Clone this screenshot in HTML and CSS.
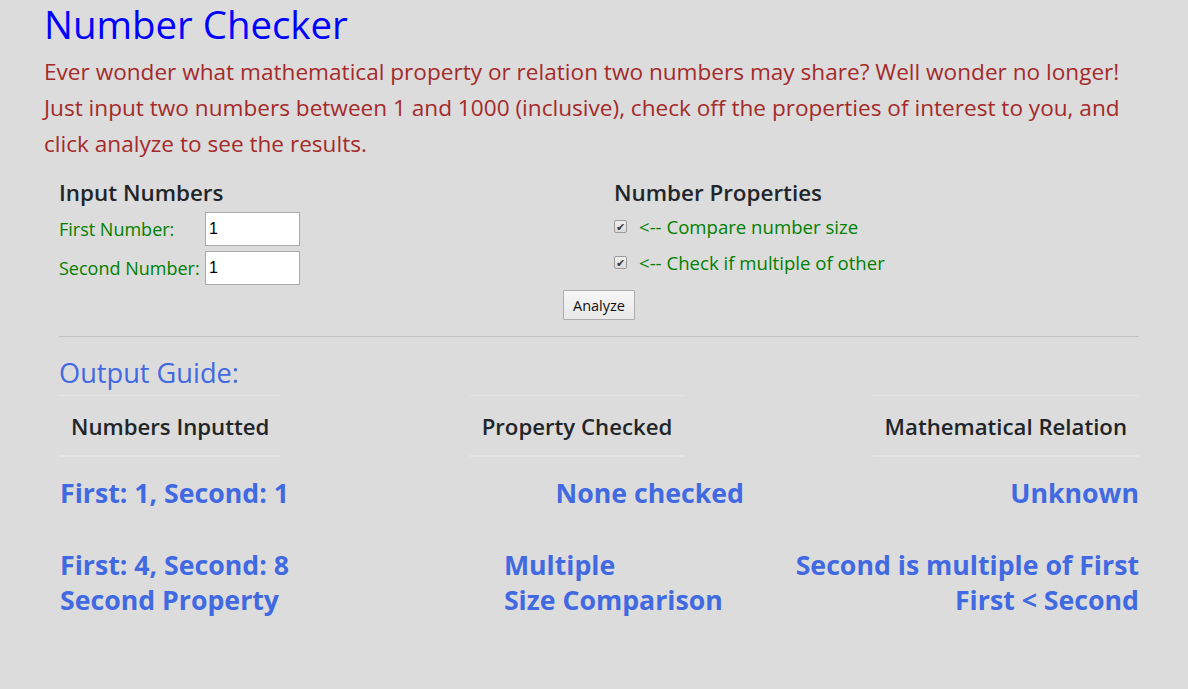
FILE: index.html
```html
<!DOCTYPE html>
<html lang="en">
<head>
<meta charset="utf-8">
<title>Number Checker</title>
<link rel="stylesheet" href="styles.css">
</head>
<body>
<main class="page">
  <h1 class="title">Number Checker</h1>
  <p class="intro">Ever wonder what mathematical property or relation two numbers may share? Well wonder no longer! Just input two numbers between 1 and 1000 (inclusive), check off the properties of interest to you, and click analyze to see the results.</p>

  <section class="form-area">
    <div class="cols">
      <div class="col">
        <h4 class="sub">Input Numbers</h4>
        <div class="fields">
          <label class="lbl" for="n1">First Number:</label>
          <input class="num" id="n1" type="text" value="1">
          <label class="lbl" for="n2">Second Number:</label>
          <input class="num" id="n2" type="text" value="1">
        </div>
      </div>
      <div class="col">
        <h4 class="sub">Number Properties</h4>
        <div class="checks">
          <label class="chk"><span class="box" aria-hidden="true">✔</span><span class="chk-text">&lt;-- Compare number size</span></label>
          <label class="chk"><span class="box" aria-hidden="true">✔</span><span class="chk-text">&lt;-- Check if multiple of other</span></label>
        </div>
      </div>
    </div>
    <div class="actions"><button class="btn" type="button">Analyze</button></div>
  </section>

  <section class="guide">
    <hr class="rule">
    <h3 class="guide-title">Output Guide:</h3>
    <div class="row head">
      <div class="th">Numbers Inputted</div>
      <div class="th">Property Checked</div>
      <div class="th">Mathematical Relation</div>
    </div>
    <div class="row res">
      <div class="cell">First: 1, Second: 1</div>
      <div class="cell">None checked</div>
      <div class="cell right">Unknown</div>
    </div>
    <div class="row res">
      <div class="cell">First: 4, Second: 8<br>Second Property</div>
      <div class="cell mid">Multiple<br>Size Comparison</div>
      <div class="cell right">Second is multiple of First<br>First &lt; Second</div>
    </div>
  </section>
</main>
</body>
</html>
```

FILE: styles.css
```css
* { box-sizing: border-box; }
html, body { margin: 0; padding: 0; }
body {
  background: #dcdcdc;
  font-family: "Open Sans", "Noto Sans", sans-serif;
  color: #212529;
}
.page {
  padding: 0 34px 0 44px;
}
.title {
  margin: 0 0 6px;
  font-size: 38.4px;
  font-weight: 400;
  line-height: 48px;
  color: #0000ff;
}
.intro {
  margin: 0 0 16px;
  font-size: 22.6px;
  line-height: 36px;
  color: #a52a2a;
}
.form-area { padding: 0 15px; }
.cols {
  display: grid;
  grid-template-columns: 1fr 1fr;
  column-gap: 30px;
}
.sub {
  margin: 0 0 5px;
  font-size: 22.4px;
  font-weight: 600;
  line-height: 29px;
  color: #212529;
}
.fields {
  display: grid;
  grid-template-columns: 146px 95px;
  row-gap: 5px;
  align-items: center;
}
.lbl {
  font-size: 18px;
  color: #008000;
  white-space: nowrap;
}
.num {
  width: 95px;
  height: 34px;
  border: 1px solid #aaaaaa;
  background: #fff;
  padding: 0 3px;
  font-family: "Liberation Sans", Arial, sans-serif;
  font-size: 16px;
  color: #000;
}
.checks {
  display: flex;
  flex-direction: column;
  gap: 13px;
  padding-top: 3px;
}
.chk {
  display: flex;
  align-items: center;
  gap: 12px;
  height: 23px;
  font-size: 18.6px;
  color: #008000;
}
.box {
  display: inline-flex;
  align-items: center;
  justify-content: center;
  width: 13px;
  height: 13px;
  border: 1px solid #9a9a9a;
  border-radius: 2px;
  background: linear-gradient(#f0f0f0, #dadada);
  color: #3a3a3a;
  font-size: 11px;
  line-height: 1;
}
.actions {
  display: flex;
  justify-content: center;
  padding-top: 5px;
}
.btn {
  height: 30px;
  padding: 0 9px;
  border: 1px solid #adadad;
  background: linear-gradient(#f6f6f6, #e8e8e8);
  font-family: "Open Sans", sans-serif;
  font-size: 14.5px;
  color: #111;
  border-radius: 1px;
}
.guide { padding: 0 15px; }
.rule {
  margin: 16px 0 0;
  border: 0;
  border-top: 1px solid #c4c4c4;
}
.guide-title {
  margin: 20px 0 7px;
  font-size: 27.2px;
  font-weight: 400;
  line-height: 31px;
  color: #4169e1;
}
.row {
  display: flex;
  justify-content: space-between;
}
.th {
  padding: 16px 12px 14px;
  border-top: 1px solid #e2e5e8;
  border-bottom: 2px solid #e2e5e8;
  font-size: 22.2px;
  font-weight: 600;
  line-height: 29px;
  color: #212529;
}
.res {
  font-size: 26.7px;
  font-weight: 700;
  line-height: 35px;
  color: #4169e1;
}
.res + .res { margin-top: 37px; }
.head + .res { margin-top: 18px; }
.cell:first-child { padding-left: 1px; }
.right { text-align: right; }
.mid { margin-left: 142px; }
```
